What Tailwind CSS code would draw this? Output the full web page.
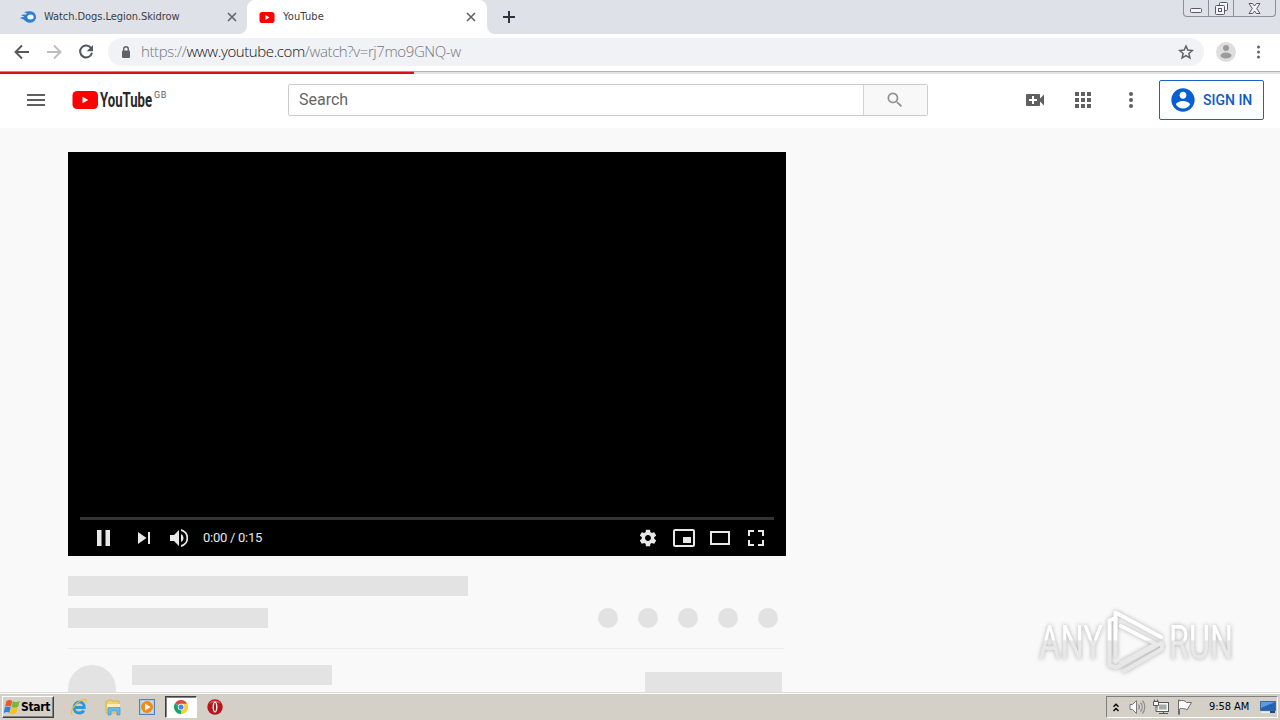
<!DOCTYPE html>
<html lang="en">
<head>
    <meta charset="UTF-8">
    <title>YouTube</title>
    <script src="https://cdn.jsdelivr.net/npm/@tailwindcss/browser@4"></script>
</head>
<body class="w-[1280px] h-[720px] overflow-hidden relative flex flex-col bg-[#f9f9f9] font-['Roboto',sans-serif]">

<!-- Tab strip -->
<div class="h-[34px] shrink-0 flex bg-[#dee1e8] text-[11px] text-[#3c4043] font-['DejaVu_Sans_Condensed','DejaVu_Sans',sans-serif]">
    <div class="w-[247px] h-full bg-white">
        <div class="h-full flex items-center pl-5 pr-[10px] bg-[#dee1e8] rounded-br-lg">
            <svg class="w-4 h-4 shrink-0" viewBox="0 0 16 16">
                <path fill="#2f7fd0" d="M4 3.2C6 2.6 8 2.2 10 2.3c3.500.2 6 2.600 6 5.700s-2.500 5.600-6 5.700c-3 0-4.500-1.700-6.500-3.200C2.500 9.700 1.200 9.400 0 9.500 1 8.200 3 7.700 4.500 8.300 3.800 7 2.500 6.300 1 6.400c1.500-1.200 3.500-1 4.500-.6L7 4.500C6 4 5 3.500 4 3.200z"/>
                <ellipse cx="10.500" cy="8" rx="3.200" ry="2.500" fill="#eef5fc"/>
            </svg>
            <span class="ml-[8px] flex-1 whitespace-nowrap tracking-[-0.06px]">Watch.Dogs.Legion.Skidrow</span>
            <svg class="w-[10px] h-[10px]" viewBox="0 0 10 10" stroke="#5f6368" stroke-width="1.600"><path d="M1 1l8 8M9 1l-8 8"/></svg>
        </div>
    </div>
    <div class="w-[240px] h-full bg-[#dee1e8]">
        <div class="h-full flex items-center pl-3 pr-[11px] bg-white rounded-t-lg">
            <svg class="w-4 h-4 shrink-0" viewBox="0 0 16 16">
                <rect x="0.500" y="3" width="15" height="11" rx="2.800" fill="#f00"/>
                <path fill="#fff" d="M6.500 6v5l4-2.500z"/>
            </svg>
            <span class="ml-[8px] flex-1 tracking-[0.15px]">YouTube</span>
            <svg class="w-[10px] h-[10px]" viewBox="0 0 10 10" stroke="#5f6368" stroke-width="1.600"><path d="M1 1l8 8M9 1l-8 8"/></svg>
        </div>
    </div>
    <div class="flex-1 h-full bg-white">
        <div class="h-full flex items-center pl-4 bg-[#dee1e8] rounded-bl-lg">
            <svg class="w-3 h-3" viewBox="0 0 12 12" stroke="#2f3340" stroke-width="2"><path d="M6 0v12M0 6h12"/></svg>
            <!-- Window buttons -->
            <div class="ml-auto mr-1 self-start w-[93px] h-[17px] flex border border-t-0 border-[#8b8f98] rounded-b-[4px]">
                <div class="w-[25px] border-r border-[#8b8f98] flex items-end justify-center pb-[3px]">
                    <svg class="w-3 h-[5px]" viewBox="0 0 12 5"><rect x="0.500" y="0.500" width="11" height="4" rx="1" fill="#f4f4f6" stroke="#555a66"/></svg>
                </div>
                <div class="w-[25px] border-r border-[#8b8f98] flex items-center justify-center">
                    <svg class="w-[13px] h-[13px]" viewBox="0 0 13 13" fill="#f4f4f6" stroke="#555a66">
                        <rect x="4.500" y="0.500" width="8" height="8" rx="1"/>
                        <rect x="0.500" y="3.500" width="9" height="9" rx="1"/>
                        <rect x="3.500" y="6.500" width="3" height="3"/>
                    </svg>
                </div>
                <div class="flex-1 flex items-center justify-center">
                    <svg class="w-[13px] h-[11px]" viewBox="0 0 13 11"><path fill="#f4f4f6" stroke="#555a66" d="M1 .5h3.500l2 2.500 2-2.500H12L8.700 5.500 12 10.500H8.500l-2-2.500-2 2.500H1L4.300 5.500z"/></svg>
                </div>
            </div>
        </div>
    </div>
</div>

<!-- Toolbar -->
<div class="h-[37px] shrink-0 flex items-center bg-white pl-3 pb-px">
    <svg class="w-5 h-5" viewBox="0 0 20 20" fill="none" stroke="#55585c" stroke-width="1.900"><path d="M17 10H4M10 3.500L3.500 10l6.500 6.500"/></svg>
    <svg class="w-5 h-5 ml-3" viewBox="0 0 20 20" fill="none" stroke="#bbbdc0" stroke-width="1.900"><path d="M3 10h13M10 3.500l6.500 6.500-6.500 6.500"/></svg>
    <svg class="w-5 h-5 ml-3" viewBox="0 0 20 20"><path fill="none" stroke="#55585c" stroke-width="2" d="M15.200 6.200A6 6 0 1 0 16 10.800"/><path fill="#55585c" d="M17 3v6.300h-6.300z"/></svg>
    <div class="ml-3 w-[1096px] h-7 rounded-full bg-[#f0f2f5] flex items-center pl-3 pr-[10px]">
        <svg class="w-3 h-3" viewBox="0 0 12 12"><path fill="none" stroke="#5f6368" stroke-width="1.400" d="M3.700 5V3a2.300 2.300 0 0 1 4.600 0v2"/><rect x="2" y="4.500" width="8" height="7.500" rx="1" fill="#5f6368"/></svg>
        <span class="ml-[9px] flex-1 pb-[2px] text-[15px] leading-5 font-light text-[#73777c] whitespace-nowrap tracking-[-0.4px] font-['Open_Sans','Noto_Sans',sans-serif]">https://<span class="text-[#101114]">www.youtube.com</span>/watch?v=rj7mo9GNQ-w</span>
        <svg class="w-4 h-4" viewBox="0 0 16 16" fill="none" stroke="#5f6368" stroke-width="1.500"><path d="M8 2l1.800 4.100 4.500.4-3.400 3 1 4.400L8 11.600l-3.900 2.300 1-4.400-3.400-3 4.500-.4z"/></svg>
    </div>
    <svg class="w-5 h-5 ml-3" viewBox="0 0 20 20"><circle cx="10" cy="10" r="10" fill="#dedede"/><circle cx="10" cy="6" r="3" fill="#9b9b9b"/><ellipse cx="10" cy="13.500" rx="5.500" ry="3" fill="#9b9b9b"/></svg>
    <svg class="w-1 h-[14px] ml-[21px]" viewBox="0 0 4 14" fill="#5f6368"><circle cx="1.500" cy="2" r="1.500"/><circle cx="1.500" cy="7" r="1.500"/><circle cx="1.500" cy="12" r="1.500"/></svg>
</div>

<!-- Loading bar -->
<div class="h-[3px] shrink-0 bg-[#e3e3e3] border-t border-[#b4b4b4]">
    <div class="w-[414px] h-[3px] -mt-px border-t border-[#b68a8a] bg-[#dd1010]"></div>
</div>

<!-- Masthead -->
<header class="h-[54px] shrink-0 bg-white flex items-center pl-[27px] pr-4 pb-[2px]">
    <svg class="w-[18px] h-3" viewBox="0 0 18 12" fill="#606060"><path d="M0 0h18v2H0zM0 5h18v2H0zM0 10h18v2H0z"/></svg>
    <div class="ml-[27px] w-[98px] h-6 flex">
        <svg class="w-[81px] h-6 overflow-visible" viewBox="0 0 81 24">
            <rect x="0.500" y="3" width="25.500" height="18" rx="4.500" fill="#f00"/>
            <path fill="#fff" d="M10.500 8.800v6.400l5.800-3.200z"/>
            <text x="28" y="19" font-family="Roboto" font-size="19.500" font-weight="700" textLength="52" lengthAdjust="spacingAndGlyphs" fill="#282828">YouTube</text>
        </svg>
        <span class="ml-[1px] mt-[1px] text-[9px] leading-[12px] text-[#606060] tracking-[0.6px]">GB</span>
    </div>
    <div class="ml-[118px] w-[640px] h-8 flex border border-[#ccc] rounded-[2px]">
        <div class="w-[574px] pl-[10px] text-base leading-[30px] text-[#666]">Search</div>
        <div class="flex-1 border-l border-[#d3d3d3] bg-[#f8f8f8] flex items-center justify-center pr-px">
            <svg class="w-5 h-5" viewBox="0 0 24 24" fill="#909090"><path d="M15.500 14h-.79l-.28-.27A6.471 6.471 0 0 0 16 9.500 6.500 6.500 0 1 0 9.500 16c1.610 0 3.090-.59 4.230-1.570l.27.280v.79l5 4.990L20.490 19l-4.990-5zm-6 0C7.010 14 5 11.990 5 9.500S7.010 5 9.500 5 14 7.010 14 9.500 11.990 14 9.500 14z"/></svg>
        </div>
    </div>
    <svg class="w-6 h-6 ml-[95px]" viewBox="0 0 24 24" fill="#606060"><path d="M17 10.500V7c0-.55-.45-1-1-1H4c-.55 0-1 .45-1 1v10c0 .55.450 1 1 1h12c.55 0 1-.45 1-1v-3.500l4 4v-11l-4 4zM14 13h-3v3H9v-3H6v-2h3V8h2v3h3v2z"/></svg>
    <svg class="w-6 h-6 ml-6" viewBox="0 0 24 24" fill="#606060"><path d="M4 4h4v4H4zM10 4h4v4h-4zM16 4h4v4h-4zM4 10h4v4H4zM10 10h4v4h-4zM16 10h4v4h-4zM4 16h4v4H4zM10 16h4v4h-4zM16 16h4v4h-4z"/></svg>
    <svg class="w-6 h-6 ml-6" viewBox="0 0 24 24" fill="#606060"><circle cx="12" cy="6" r="2"/><circle cx="12" cy="12" r="2"/><circle cx="12" cy="18" r="2"/></svg>
    <a class="ml-auto w-[105px] h-10 flex items-center pl-[9px] border border-[#1a62c4] rounded-[2px] text-sm font-medium text-[#0b5bcb] whitespace-nowrap">
        <svg class="w-7 h-7 shrink-0" viewBox="0 0 24 24" fill="#065fd4"><path d="M12 2C6.480 2 2 6.480 2 12s4.480 10 10 10 10-4.480 10-10S17.520 2 12 2zm0 3c1.660 0 3 1.340 3 3s-1.340 3-3 3-3-1.340-3-3 1.340-3 3-3zm0 14.200c-2.500 0-4.710-1.280-6-3.220.03-1.990 4-3.080 6-3.080 1.990 0 5.970 1.090 6 3.080-1.290 1.940-3.500 3.220-6 3.220z"/></svg>
        <span class="ml-[6px]">SIGN IN</span>
    </a>
</header>

<!-- Watch page -->
<main class="h-[564px] shrink-0 overflow-hidden pl-[68px] pt-6">
    <div class="w-[718px] h-[404px] bg-black flex flex-col justify-end px-3">
        <div class="h-[3px] bg-[#333]"></div>
        <div class="h-9 flex items-center text-[#e8e8e8]">
            <svg class="w-[14px] h-4 ml-[17px]" viewBox="0 0 14 16" fill="#e8e8e8"><path d="M0 0h4.500v16H0zM8.500 0H13v16H8.500z"/></svg>
            <svg class="w-3 h-3 ml-[27px]" viewBox="0 0 12 12" fill="#e8e8e8"><path d="M0 0l8.500 6L0 12zM10 0h2v12h-2z"/></svg>
            <svg class="w-[18px] h-[18px] ml-5" viewBox="0 0 18 18" fill="#e8e8e8"><path d="M0 6v6h4l5 5V1L4 6zM13.500 9A4.500 4.500 0 0 0 11 5v8c1.500-.7 2.500-2.200 2.500-4zM11 0v2.100a7.100 7.100 0 0 1 0 13.800V18a9.200 9.200 0 0 0 0-18z"/></svg>
            <span class="ml-[15px] text-[13px] tracking-[-0.27px]">0:00 / 0:15</span>
            <svg class="w-5 h-5 ml-auto" viewBox="0 0 24 24" fill="#e8e8e8"><path d="M19.430 12.980c.04-.32.070-.64.070-.98s-.03-.66-.07-.98l2.110-1.650c.19-.15.240-.42.120-.64l-2-3.460c-.12-.22-.39-.3-.61-.22l-2.490 1c-.52-.4-1.080-.73-1.690-.98l-.38-2.650A.488.488 0 0 0 14 2h-4c-.25 0-.46.180-.49.420l-.38 2.650c-.61.250-1.170.590-1.690.980l-2.490-1c-.23-.09-.49 0-.61.220l-2 3.460c-.13.220-.07.490.12.640l2.110 1.650c-.04.320-.07.650-.07.980s.03.660.070.980l-2.110 1.650c-.19.150-.24.420-.12.640l2 3.460c.12.220.390.300.610.220l2.490-1c.52.400 1.080.730 1.690.980l.38 2.650c.03.240.240.420.490.420h4c.25 0 .46-.18.490-.42l.38-2.650c.61-.25 1.170-.59 1.690-.98l2.490 1c.23.090.49 0 .61-.22l2-3.460c.12-.22.070-.49-.12-.64l-2.110-1.650zM12 15.500c-1.930 0-3.500-1.570-3.500-3.500s1.570-3.500 3.500-3.500 3.500 1.570 3.500 3.500-1.570 3.500-3.500 3.500z"/></svg>
            <svg class="w-[22px] h-[18px] ml-[15px]" viewBox="0 0 22 18"><rect x="1" y="1" width="20" height="16" rx="1" fill="none" stroke="#e8e8e8" stroke-width="2"/><path fill="#e8e8e8" d="M10 8h8v6h-8z"/></svg>
            <svg class="w-5 h-[14px] ml-[15px]" viewBox="0 0 20 14"><rect x="1" y="1" width="18" height="12" fill="none" stroke="#e8e8e8" stroke-width="2"/></svg>
            <svg class="w-4 h-4 ml-[18px] mr-[10px]" viewBox="0 0 16 16" fill="none" stroke="#e8e8e8" stroke-width="2"><path d="M1 6V1h5M10 1h5v5M15 10v5h-5M6 15H1v-5"/></svg>
        </div>
    </div>
    <div class="mt-5 w-[400px] h-5 bg-[#e3e3e3]"></div>
    <div class="mt-3 w-[710px] h-5 flex gap-5">
        <div class="w-[200px] h-5 mr-auto bg-[#e3e3e3]"></div>
        <div class="w-5 h-5 rounded-full bg-[#e2e2e2]"></div>
        <div class="w-5 h-5 rounded-full bg-[#e2e2e2]"></div>
        <div class="w-5 h-5 rounded-full bg-[#e2e2e2]"></div>
        <div class="w-5 h-5 rounded-full bg-[#e2e2e2]"></div>
        <div class="w-5 h-5 rounded-full bg-[#e2e2e2]"></div>
    </div>
    <div class="mt-5 w-[716px] border-t border-[#ebebeb] pt-4 flex items-start">
        <div class="w-12 h-12 rounded-full bg-[#e3e3e3]"></div>
        <div class="ml-4 w-[200px] h-5 bg-[#e3e3e3]"></div>
        <div class="ml-auto mt-[7px] mr-[2px] w-[137px] h-9 bg-[#e3e3e3]"></div>
    </div>
</main>

<!-- Taskbar -->
<footer class="h-7 shrink-0 flex items-center bg-[#d4d0c8] border-t border-[#dedbd4] shadow-[inset_0_1px_0_#fff] pl-[2px] pr-[2px] pt-px">
    <div class="w-[52px] h-[22px] flex items-center border border-t-white border-l-white border-r-[#404040] border-b-[#404040] shadow-[inset_-1px_-1px_0_#808080] pl-px">
        <svg class="w-4 h-4 shrink-0" viewBox="0 0 16 16">
            <path fill="#e8592b" d="M2.500 2C4.500.5 6.500.8 8.300 1.900L6.900 7.500C5 6.500 3.200 6.500 1 7.800z"/>
            <path fill="#79b932" d="M8.800 2.300c2 1 4.500 1 7-.4l-1.700 5.800c-2.300 1.300-4.500 1.300-6.700.2z"/>
            <path fill="#2f83d8" d="M.8 8.600c2-1.300 4-1.300 5.900-.3l-1.300 5.500C3.600 12.800 2 12.800-.3 14.100z"/>
            <path fill="#f7c21e" d="M7.300 8.700c2 1.100 4.200 1 6.500-.2l-1.500 5.800c-2.300 1.300-4.600 1.200-6.400.1z"/>
        </svg>
        <span class="text-[12px] font-bold text-black tracking-[-0.35px] ml-px pb-px font-['DejaVu_Sans_Condensed','DejaVu_Sans',sans-serif]">Start</span>
    </div>
    <svg class="w-[18px] h-[18px] ml-4" viewBox="0 0 18 18">
        <path fill="none" stroke="#2f97dc" stroke-width="2.800" d="M4.500 9.500h9.800C14.500 6.500 12.500 4 9.500 4S4 6.500 4 9.800s2.300 5.200 5.300 5.200c2 0 3.500-.8 4.500-2.500"/>
        <path fill="none" stroke="#e9bd35" stroke-width="1.300" d="M2.500 16.500C-1 14 5 5.500 11 2.500c4-2 6-1 5 2"/>
    </svg>
    <svg class="w-[18px] h-[18px] ml-4" viewBox="0 0 18 18">
        <path fill="#efd372" stroke="#c9a63e" stroke-width=".7" d="M2 3.500l5-2 1 1.500h7v12H2z"/>
        <path fill="#fbefb2" d="M3 6h13v4H3z"/>
        <path fill="#70b8e2" stroke="#3e8fc4" stroke-width=".6" d="M4 9.500h12V17h-3v-4H7v4H4z"/>
    </svg>
    <svg class="w-4 h-4 ml-[17px]" viewBox="0 0 16 16">
        <rect x=".5" y=".5" width="15" height="15" fill="#a9cdec" stroke="#4a86bd"/>
        <rect x="2.500" y="2.500" width="11" height="11" fill="#dbeaf6"/>
        <circle cx="8" cy="8" r="6" fill="#f08a1a"/>
        <path fill="#fff" d="M6 4.500v7l5.500-3.500z"/>
    </svg>
    <div class="ml-[10px] w-[32px] h-[22px] flex items-center justify-center bg-white border border-t-[#404040] border-l-[#404040] border-r-white border-b-white shadow-[inset_1px_1px_0_#808080]">
        <svg class="w-[14px] h-[14px]" viewBox="0 0 16 16">
            <path fill="#dd4b3e" d="M8 8L1.070 4a8 8 0 0 1 13.860 0z"/>
            <path fill="#fccd3d" d="M8 8l6.930-4A8 8 0 0 1 8 16z"/>
            <path fill="#1aa260" d="M8 8v8A8 8 0 0 1 1.070 4z"/>
            <path fill="#fccd3d" d="M8 4.400h7.150A8 8 0 0 1 8 16l3-6z"/>
            <circle cx="8" cy="8" r="3.700" fill="#fff"/>
            <circle cx="8" cy="8" r="2.900" fill="#4285f4"/>
        </svg>
    </div>
    <svg class="w-4 h-4 ml-[10px]" viewBox="0 0 16 16"><circle cx="8" cy="8" r="7.700" fill="#b8141b"/><path fill="#dd5d5d" d="M2 5a7 7 0 0 1 12 0C10 2.500 6 2.500 2 5z"/><ellipse cx="8" cy="8" rx="2.500" ry="5.500" fill="#f5f0f0"/><ellipse cx="8" cy="8" rx="1" ry="4.300" fill="#9a1a20"/></svg>

    <!-- Tray -->
    <div class="ml-auto w-[172px] h-[22px] flex items-center border border-t-[#808080] border-l-[#808080] border-r-white border-b-white pl-[6px] pr-px">
        <svg class="w-[6px] h-[9px]" viewBox="0 0 6 9" fill="none" stroke="#000" stroke-width="1.400"><path d="M.5 3.700L3 1.200l2.500 2.500M.5 8L3 5.500 5.500 8"/></svg>
        <svg class="w-[17px] h-4 ml-[10px]" viewBox="0 0 17 16"><path fill="#f8f8f8" stroke="#77797b" d="M1 5.500h2.500l4-4v13l-4-4H1z"/><path fill="none" stroke="#8b8d8f" stroke-width="1.200" d="M9.500 5.500c1.200 1.500 1.200 3.500 0 5M11.500 3.500c2.200 2.600 2.200 6.400 0 9M13.500 1.500c3 3.600 3 9.400 0 13"/></svg>
        <svg class="w-4 h-4 ml-[7px]" viewBox="0 0 16 16"><rect x="4" y="3.500" width="11.500" height="9" fill="#f6f6f6" stroke="#55585b"/><rect x="6" y="5.500" width="7.500" height="5" fill="#a5a7a8"/><path stroke="#55585b" d="M6 14.500h9M10.500 12v3"/><path fill="#f6f6f6" stroke="#55585b" d="M.5 2.500h5v4h-5zM1.500 .5v2M4.500 .5v2M3 6.500v6h2"/></svg>
        <svg class="w-4 h-4 ml-2" viewBox="0 0 16 16"><path fill="#fafafa" stroke="#6c6e70" d="M1.500 1v14.500h1V10c2.500-1.500 4 .2 6 0l1.500 1 4.500-7.500H9.500C8 1.500 5 .8 2.500 2V1z"/></svg>
        <span class="ml-4 text-[11px] text-black whitespace-nowrap tracking-[-0.05px] font-['DejaVu_Sans_Condensed','DejaVu_Sans',sans-serif]">9:58 AM</span>
        <svg class="w-4 h-[14px] ml-auto" viewBox="0 0 16 14"><path fill="#2463b4" stroke="#1c4684" stroke-width=".6" d="M.5 1.500h15v9H.5z"/><path fill="#5b9be0" d="M1 2h14L1 8z"/><path fill="#e9edf2" d="M1 11.500h9v1.500H1z"/><path fill="#1c4684" d="M10 11h5v2h-5z"/></svg>
    </div>
</footer>

<!-- Watermark over the page -->
<svg class="absolute left-[1030px] top-[600px] w-[210px] h-20 drop-shadow-[0_0_2px_rgba(0,0,0,0.3)]" viewBox="0 0 210 80">
    <defs>
        <linearGradient id="fade" x1="0" y1="0" x2="0" y2="80" gradientUnits="userSpaceOnUse">
            <stop offset="0.500" stop-color="#fff"/>
            <stop offset="0.510" stop-color="#e9e9e9"/>
            <stop offset="1" stop-color="#e6e6e6"/>
        </linearGradient>
    </defs>
    <g fill="url(#fade)" font-family="Roboto" font-size="49">
        <text x="9" y="58.500" textLength="64" lengthAdjust="spacingAndGlyphs">ANY</text>
        <text x="139" y="58.500" textLength="64" lengthAdjust="spacingAndGlyphs">RUN</text>
    </g>
    <g fill="none" stroke="url(#fade)" stroke-width="4" stroke-linejoin="round" stroke-linecap="round">
        <path d="M85.500 56V12.500L131 37"/>
        <path d="M91 26l35 18-35 19"/>
        <path d="M85.500 18l-6 2.500v45l7 2L131 43"/>
        <path d="M94 71l38-22v-5"/>
    </g>
</svg>
</body>
</html>
